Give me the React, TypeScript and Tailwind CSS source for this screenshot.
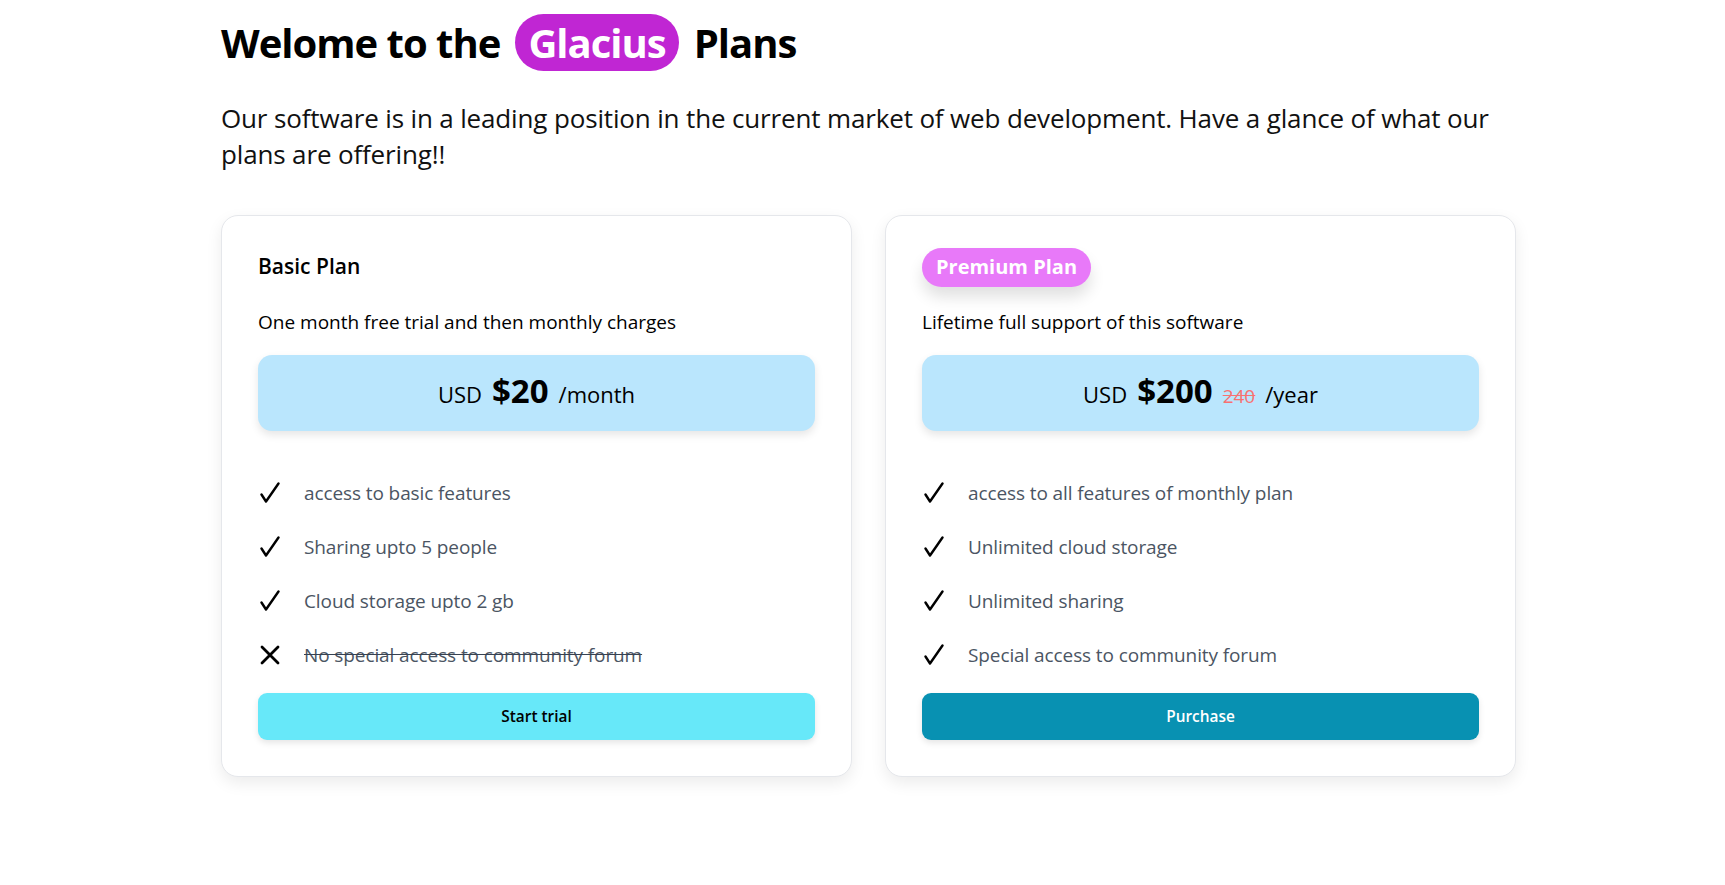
type Feature = { text: string; included: boolean };

const basicFeatures: Feature[] = [
  { text: "access to basic features", included: true },
  { text: "Sharing upto 5 people", included: true },
  { text: "Cloud storage upto 2 gb", included: true },
  { text: "No special access to community forum", included: false },
];

const premiumFeatures: Feature[] = [
  { text: "access to all features of monthly plan", included: true },
  { text: "Unlimited cloud storage", included: true },
  { text: "Unlimited sharing", included: true },
  { text: "Special access to community forum", included: true },
];

const CheckIcon = () => (
  <svg width="20" height="22" viewBox="0 0 20 22" fill="none" className="shrink-0">
    <path d="M1.5 12.5 L6 19.5 L18.5 1.5" stroke="#000" strokeWidth="2.4" strokeLinecap="round" strokeLinejoin="round" />
  </svg>
);

const CrossIcon = () => (
  <svg width="20" height="22" viewBox="0 0 20 22" fill="none" className="shrink-0">
    <path d="M2 3 L18 19 M18 3 L2 19" stroke="#000" strokeWidth="2.8" strokeLinecap="round" />
  </svg>
);

const FeatureRow = ({ text, included }: Feature) => (
  <li className="flex h-[54px] items-center">
    <span className="flex w-[46px] shrink-0 pl-[2px]">{included ? <CheckIcon /> : <CrossIcon />}</span>
    <span className={`text-[19px] tracking-[-0.1px] text-[#4b5563] ${included ? "" : "line-through decoration-[#374151]"}`}>{text}</span>
  </li>
);

export default function App() {
  return (
    <div className="min-h-screen bg-white font-['Open_Sans','Noto_Sans',sans-serif] text-black">
      <div className="ml-[221px] w-[1295px] pt-[14px] pb-[80px]">
        <h1 className="flex h-[57px] items-center text-[40px] font-bold tracking-[-1px]">
          <span>Welome to the</span>
          <span className="mx-[15px] flex h-[57px] items-center rounded-full bg-[#c026d3] px-[13px] text-white">Glacius</span>
          <span>Plans</span>
        </h1>
        <p className="mt-[29px] text-[26px] leading-[36px] tracking-[-0.15px] text-[#111]">
          Our software is in a leading position in the current market of web development. Have a glance of what our plans are offering!!
        </p>

        <div className="mt-[43px] grid grid-cols-2 gap-[33px]">
          {/* Basic */}
          <div className="rounded-[17px] border border-gray-200 bg-white px-[36px] pt-[31px] pb-[36px] shadow-[0_6px_16px_rgba(0,0,0,0.08)]">
            <div className="flex h-[40px] items-center">
              <h3 className="text-[21px] font-semibold">Basic Plan</h3>
            </div>
            <p className="mt-[21px] text-[19px] leading-[28px]">One month free trial and then monthly charges</p>
            <div className="mt-[19px] flex h-[76px] items-center justify-center rounded-[14px] bg-[#bae6fd] pb-[5px] shadow-[0_4px_8px_rgba(0,0,0,0.1)]">
              <div className="flex items-baseline gap-[10px]">
                <span className="text-[22px]">USD</span>
                <span className="text-[33px] font-bold">$20</span>
                <span className="text-[22px]">/month</span>
              </div>
            </div>
            <ul className="mt-[35px]">
              {basicFeatures.map((f, i) => (
                <FeatureRow key={i} {...f} />
              ))}
            </ul>
            <button className="mt-[11px] h-[47px] w-full rounded-[9px] bg-[#67e8f9] text-[15.4px] font-semibold text-black shadow-[0_3px_6px_rgba(0,0,0,0.1)]">
              Start trial
            </button>
          </div>

          {/* Premium */}
          <div className="rounded-[17px] border border-gray-200 bg-white px-[36px] pt-[31px] pb-[36px] shadow-[0_6px_16px_rgba(0,0,0,0.08)]">
            <div className="flex h-[40px] items-center">
              <span className="flex h-[39px] items-center rounded-full bg-[#e879f9] px-[14px] text-[20px] font-bold text-white shadow-[0_10px_15px_rgba(0,0,0,0.12)]">
                Premium Plan
              </span>
            </div>
            <p className="mt-[21px] text-[19px] leading-[28px]">Lifetime full support of this software</p>
            <div className="mt-[19px] flex h-[76px] items-center justify-center rounded-[14px] bg-[#bae6fd] pb-[5px] shadow-[0_4px_8px_rgba(0,0,0,0.1)]">
              <div className="flex items-baseline gap-[10px]">
                <span className="text-[22px]">USD</span>
                <span className="text-[33px] font-bold">$200</span>
                <span className="text-[19px] text-[#f87171] line-through">240</span>
                <span className="text-[22px]">/year</span>
              </div>
            </div>
            <ul className="mt-[35px]">
              {premiumFeatures.map((f, i) => (
                <FeatureRow key={i} {...f} />
              ))}
            </ul>
            <button className="mt-[11px] h-[47px] w-full rounded-[9px] bg-[#0891b2] text-[15.4px] font-semibold text-white shadow-[0_3px_6px_rgba(0,0,0,0.1)]">
              Purchase
            </button>
          </div>
        </div>
      </div>
    </div>
  );
}
